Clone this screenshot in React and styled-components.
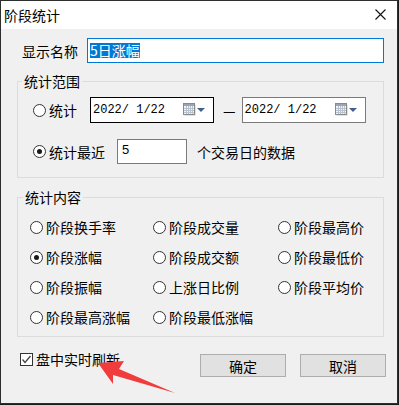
import React from "react";
import styled, { createGlobalStyle } from "styled-components";

const Global = createGlobalStyle`
  html, body { margin: 0; padding: 0; }
  body {
    background: #1b1b1b;
    font-family: "Noto Sans CJK SC", "Liberation Sans", sans-serif;
    font-size: 14px;
    color: #000;
  }
  * { box-sizing: border-box; }
`;

const Window = styled.div`
  position: relative;
  width: 398px;
  height: 404px;
  border: 1px solid #2e2e2e;
  background: #f0f0f0;
  display: flex;
  flex-direction: column;
`;

const TitleBar = styled.div`
  height: 28px;
  background: #fff;
  display: flex;
  align-items: center;
  justify-content: space-between;
  padding: 0 11px 1px 3px;
  font-size: 14px;
  line-height: 16px;
`;

const Client = styled.div`
  flex: 1;
  padding: 9px 13px 0 16px;
  display: flex;
  flex-direction: column;
`;

const NameRow = styled.div`
  display: flex;
  align-items: center;
  height: 25px;
`;

const NameLabel = styled.span`
  width: 70px;
  padding-left: 5px;
  line-height: 16px;
`;

const NameInput = styled.div`
  flex: 1;
  height: 25px;
  border: 1px solid #0078d7;
  background: #fff;
  display: flex;
  align-items: center;
  padding-left: 2px;
`;

const Selected = styled.span`
  background: #0078d7;
  color: #fff;
  line-height: 15px;
  font-size: 14px;
`;

const Group = styled.fieldset`
  margin: ${(p) => p.$mt}px 0 0 0;
  border: 1px solid #dcdcdc;
  padding: ${(p) => p.$pad};
  min-width: 0;
`;

const Legend = styled.legend`
  padding: 0 2px;
  margin-left: ${(p) => p.$ml}px;
  line-height: 16px;
  font-size: 14px;
`;

const Row = styled.div`
  display: flex;
  align-items: center;
  height: ${(p) => p.$h}px;
  margin-bottom: ${(p) => p.$mb || 0}px;
`;

const RadioLabel = styled.label`
  display: flex;
  align-items: center;
  width: ${(p) => (p.$w ? p.$w + "px" : "auto")};
  line-height: 16px;
  white-space: nowrap;
`;

const RadioCircle = styled.span`
  width: 13px;
  height: 13px;
  border-radius: 50%;
  border: 1px solid #333;
  background: #fff;
  display: inline-flex;
  align-items: center;
  justify-content: center;
  margin-right: 3px;
  flex: none;
  &::after {
    content: "";
    width: 5px;
    height: 5px;
    border-radius: 50%;
    background: #1a1a1a;
    display: ${(p) => (p.$checked ? "block" : "none")};
  }
`;

const DateBox = styled.div`
  width: 124px;
  height: 26px;
  border: 1px solid ${(p) => (p.$focused ? "#000" : "#7a7a7a")};
  background: #fff;
  display: flex;
  align-items: center;
  justify-content: space-between;
  padding: 0 8px 0 2px;
  font-family: "Liberation Mono", monospace;
  font-size: 12px;
`;

const Dash = styled.span`
  margin: 0 6px 0 9px;
  line-height: 16px;
`;

const SmallInput = styled.div`
  width: 70px;
  height: 25px;
  border: 1px solid #7a7a7a;
  background: #fff;
  padding: 2px 0 0 4px;
  font-family: "Liberation Sans", sans-serif;
  font-size: 13px;
  line-height: 16px;
  margin-right: 10px;
`;

const Text = styled.span`
  line-height: 16px;
`;

const Grid = styled.div`
  display: grid;
  grid-template-columns: 123px 125px 1fr;
  grid-auto-rows: 30px;
  align-items: center;
`;

const Bottom = styled.div`
  display: flex;
  align-items: flex-start;
  margin-top: 17px;
`;

const CheckLabel = styled.label`
  display: flex;
  align-items: center;
  margin: -3px 0 0 3px;
  line-height: 16px;
`;

const CheckBox = styled.span`
  width: 13px;
  height: 13px;
  border: 1px solid #333;
  background: #fff;
  margin-right: 3px;
  display: inline-flex;
  align-items: center;
  justify-content: center;
`;

const Buttons = styled.div`
  margin-left: auto;
  margin-right: -2px;
  display: flex;
  gap: 14px;
`;

const Button = styled.button`
  width: 86px;
  height: 23px;
  background: #e1e1e1;
  border: 1px solid #adadad;
  font-family: "Noto Sans CJK SC", sans-serif;
  font-size: 14px;
  line-height: 16px;
  padding: 0;
  color: #000;
`;

const ArrowLayer = styled.svg`
  position: absolute;
  left: -1px;
  top: -1px;
  pointer-events: none;
`;

const Radio = ({ checked, children, w }) => (
  <RadioLabel $w={w}>
    <RadioCircle $checked={checked} />
    {children}
  </RadioLabel>
);

const CalendarIcon = () => (
  <svg width="22" height="14" viewBox="0 0 22 14">
    <rect x="1.5" y="1.5" width="11" height="11" fill="#c8c8c8" />
    <rect x="0.5" y="0.5" width="11" height="11" fill="#f4f4f4" stroke="#8a8a8a" />
    <rect x="1" y="1" width="10" height="2" fill="#9aa4b4" />
    <path d="M1 5.5h10M1 7.5h10M1 9.5h10M3.5 3v8M5.5 3v8M7.5 3v8M9.5 3v8" stroke="#b9c2cf" strokeWidth="1" />
    <path d="M14 5h8l-4 4z" fill="#41608e" />
  </svg>
);

const items = [
  ["阶段换手率", "阶段成交量", "阶段最高价"],
  ["阶段涨幅", "阶段成交额", "阶段最低价"],
  ["阶段振幅", "上涨日比例", "阶段平均价"],
  ["阶段最高涨幅", "阶段最低涨幅"],
];

export default function App() {
  return (
    <>
      <Global />
      <Window>
        <TitleBar>
          <span>阶段统计</span>
          <svg width="11" height="11" viewBox="0 0 11 11">
            <path d="M0.5 0.5L10.5 10.5M10.5 0.5L0.5 10.5" stroke="#111" strokeWidth="1.1" />
          </svg>
        </TitleBar>
        <Client>
          <NameRow>
            <NameLabel>显示名称</NameLabel>
            <NameInput>
              <Selected>5日涨幅</Selected>
            </NameInput>
          </NameRow>

          <Group $mt={10} $pad="8px 14px 13px 15px">
            <Legend $ml={-11}>统计范围</Legend>
            <Row $h={26} $mb={16}>
              <Radio w={57}>统计</Radio>
              <DateBox $focused>
                <span>2022/ 1/22</span>
                <CalendarIcon />
              </DateBox>
              <Dash>—</Dash>
              <DateBox>
                <span>2022/ 1/22</span>
                <CalendarIcon />
              </DateBox>
            </Row>
            <Row $h={25}>
              <Radio checked w={84}>统计最近</Radio>
              <SmallInput>5</SmallInput>
              <Text>个交易日的数据</Text>
            </Row>
          </Group>

          <Group $mt={11} $pad="7px 10px 4px 12px">
            <Legend $ml={-7}>统计内容</Legend>
            <Grid>
              {items.flat().map((t) => (
                <Radio key={t} checked={t === "阶段涨幅"}>{t}</Radio>
              ))}
            </Grid>
          </Group>

          <Bottom>
            <CheckLabel>
              <CheckBox>
                <svg width="11" height="11" viewBox="0 0 11 11">
                  <path d="M1.5 5.5L4 8.5L9.5 2" fill="none" stroke="#444" strokeWidth="1.3" />
                </svg>
              </CheckBox>
              盘中实时刷新
            </CheckLabel>
            <Buttons>
              <Button>确定</Button>
              <Button>取消</Button>
            </Buttons>
          </Bottom>
        </Client>
        <ArrowLayer width="399" height="405" viewBox="0 0 399 405">
          <path d="M98 363 L124 361 L119 369 L175 393 L113 375 L113 384 Z" fill="#f03c3c" />
        </ArrowLayer>
      </Window>
    </>
  );
}
